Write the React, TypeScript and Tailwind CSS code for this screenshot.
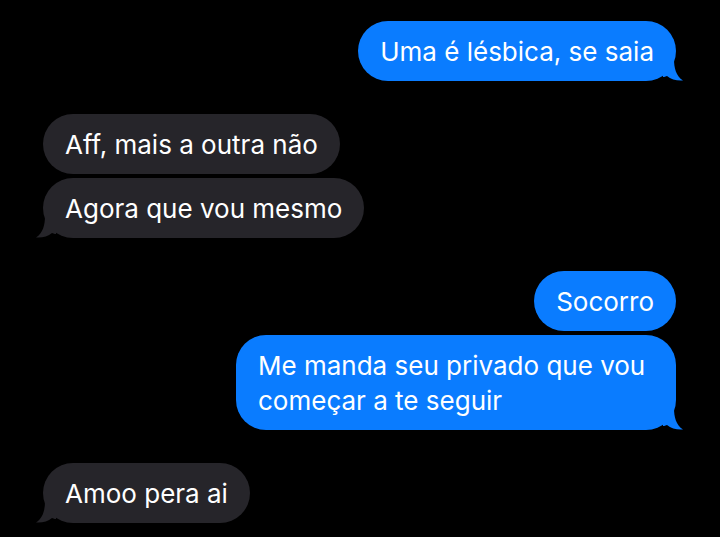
import React from 'react'

type Msg = { text: string; me: boolean; tail: boolean; gap: 'big' | 'small' | 'none' }

const messages: Msg[] = [
    { text: 'Uma é lésbica, se saia', me: true, tail: true, gap: 'none' },
    { text: 'Aff, mais a outra não', me: false, tail: false, gap: 'big' },
    { text: 'Agora que vou mesmo', me: false, tail: true, gap: 'small' },
    { text: 'Socorro', me: true, tail: false, gap: 'big' },
    { text: 'Me manda seu privado que vou começar a te seguir', me: true, tail: true, gap: 'small' },
    { text: 'Amoo pera ai', me: false, tail: true, gap: 'big' },
]

const Tail: React.FC<{ me: boolean }> = ({ me }) => (
    <svg
        width="22"
        height="22"
        viewBox="0 0 22 22"
        className={me ? 'absolute bottom-0 -right-[9px]' : 'absolute bottom-0 -left-[9px] -scale-x-100'}
    >
        <path
            d="M0 0 H11 C11 9 13 17 20 21.5 C14 22 8 20.5 4 17 C2 18 0 18 0 18 Z"
            fill={me ? '#0a7cff' : '#26252a'}
        />
    </svg>
)

const Bubble: React.FC<{ msg: Msg }> = ({ msg }) => {
    const gap = msg.gap === 'big' ? 'mt-[33px]' : msg.gap === 'small' ? 'mt-[4px]' : ''
    return (
        <div className={`flex ${msg.me ? 'justify-end' : 'justify-start'} ${gap}`}>
            <div
                className={`relative max-w-[440px] rounded-[30px] px-[22px] py-[12.5px] text-[26px] leading-[35px] text-white ${
                    msg.me ? 'bg-[#0a7cff]' : 'bg-[#26252a]'
                }`}
            >
                <span className="relative z-10">{msg.text}</span>
                {msg.tail && <Tail me={msg.me} />}
            </div>
        </div>
    )
}

export default function App() {
    return (
        <div
            className="w-[720px] h-[537px] overflow-hidden bg-black pt-[21px] pl-[43px] pr-[44px]"
            style={{ fontFamily: 'Inter, "Liberation Sans", sans-serif' }}
        >
            {messages.map((m, i) => (
                <Bubble key={i} msg={m} />
            ))}
        </div>
    )
}
